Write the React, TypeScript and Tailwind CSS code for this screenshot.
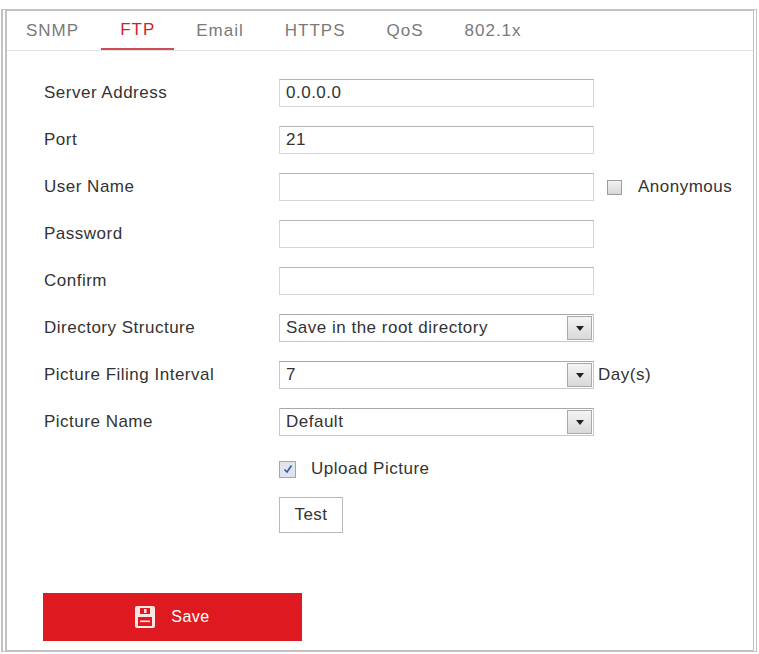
import React from "react";

const tabs = ["SNMP", "FTP", "Email", "HTTPS", "QoS", "802.1x"];

function TextBox({ value = "" }: { value?: string }) {
  return (
    <div className="flex h-[28px] w-[315px] items-center border border-[#d6d6d6] border-t-[#b4b4b4] bg-white pl-[6px] text-[#333]">
      {value}
    </div>
  );
}

function SelectBox({ value }: { value: string }) {
  return (
    <div className="flex h-[28px] w-[315px] items-center justify-between border border-[#c8c8c8] border-t-[#a8a8a8] bg-white pl-[6px] pr-[1px] text-[#333]">
      <span>{value}</span>
      <span className="flex h-[24px] w-[25px] items-center justify-center border border-[#a9a9a9] bg-gradient-to-b from-[#f4f4f4] to-[#d9d9d9]">
        <svg width="8" height="5" viewBox="0 0 8 5">
          <path d="M0 0 L8 0 L4 5 Z" fill="#222" />
        </svg>
      </span>
    </div>
  );
}

function Row({ label, children }: { label: string; children: React.ReactNode }) {
  return (
    <div className="flex h-[28px] items-center">
      <div className="w-[235px] shrink-0 text-[#333]">{label}</div>
      {children}
    </div>
  );
}

export default function App() {
  return (
    <div className="min-h-screen bg-white pt-[9px] pl-[1px] font-['Liberation_Sans',Arial,sans-serif] text-[17px] tracking-[0.5px]">
      <div className="flex h-[643px] w-[756px] flex-col border-2 border-l-[6px] border-r-4 border-double border-[#c2c2c2] border-r-solid border-t-solid border-b-solid">
        {/* Tabs */}
        <div className="flex h-[40px] shrink-0 items-stretch gap-[3px] border-b border-[#e2e2e2] tracking-[1px]">
          {tabs.map((t) => (
            <div
              key={t}
              className={
                t === "FTP"
                  ? "flex items-center border-b-2 border-[#cf4b55] px-[19px] pt-[1px] text-[#d0232c]"
                  : "flex items-center px-[19px] text-[#7a7a7a]"
              }
            >
              {t}
            </div>
          ))}
        </div>

        {/* Form */}
        <div className="flex flex-1 flex-col pl-[37px] pt-[28px]">
          <div className="flex flex-col gap-[19px]">
            <Row label="Server Address">
              <TextBox value="0.0.0.0" />
            </Row>
            <Row label="Port">
              <TextBox value="21" />
            </Row>
            <Row label="User Name">
              <TextBox />
              <span className="ml-[13px] h-[15px] w-[15px] border border-[#9c9c9c] bg-gradient-to-b from-[#f2f2f2] to-[#d8d8d8]" />
              <span className="ml-[16px] text-[#333]">Anonymous</span>
            </Row>
            <Row label="Password">
              <TextBox />
            </Row>
            <Row label="Confirm">
              <TextBox />
            </Row>
            <Row label="Directory Structure">
              <SelectBox value="Save in the root directory" />
            </Row>
            <Row label="Picture Filing Interval">
              <SelectBox value="7" />
              <span className="ml-[4px] text-[#333]">Day(s)</span>
            </Row>
            <Row label="Picture Name">
              <SelectBox value="Default" />
            </Row>
            <div className="flex h-[28px] items-center pl-[235px]">
              <span className="flex h-[17px] w-[17px] items-center justify-center border border-[#a0a6b4] bg-[#dfe4ee]">
                <svg width="10" height="10" viewBox="0 0 10 10">
                  <path d="M1.5 5.5 L4 8 L8.5 1.5" fill="none" stroke="#3b58a6" strokeWidth="1.6" />
                </svg>
              </span>
              <span className="ml-[15px] text-[#333]">Upload Picture</span>
            </div>
          </div>
          <div className="mt-[14px] pl-[235px]">
            <button className="flex h-[36px] w-[64px] items-center justify-center border border-[#b8b8b8] bg-white text-[#333]">
              Test
            </button>
          </div>

          <button className="ml-[-1px] mt-[60px] flex h-[48px] w-[259px] items-center justify-center gap-[16px] bg-[#de1a20] text-[16px] text-white">
            <svg width="20" height="22" viewBox="0 0 20 22">
              <rect x="0" y="0" width="20" height="22" rx="2" fill="#fbe4e4" />
              <rect x="5" y="2" width="10" height="6" fill="#de1a20" />
              <rect x="9" y="3" width="2.5" height="4" fill="#fbe4e4" />
              <rect x="3" y="11" width="14" height="9" fill="#de1a20" />
              <rect x="5" y="14.5" width="10" height="1.6" fill="#fbe4e4" />
            </svg>
            <span>Save</span>
          </button>
        </div>
      </div>
    </div>
  );
}
